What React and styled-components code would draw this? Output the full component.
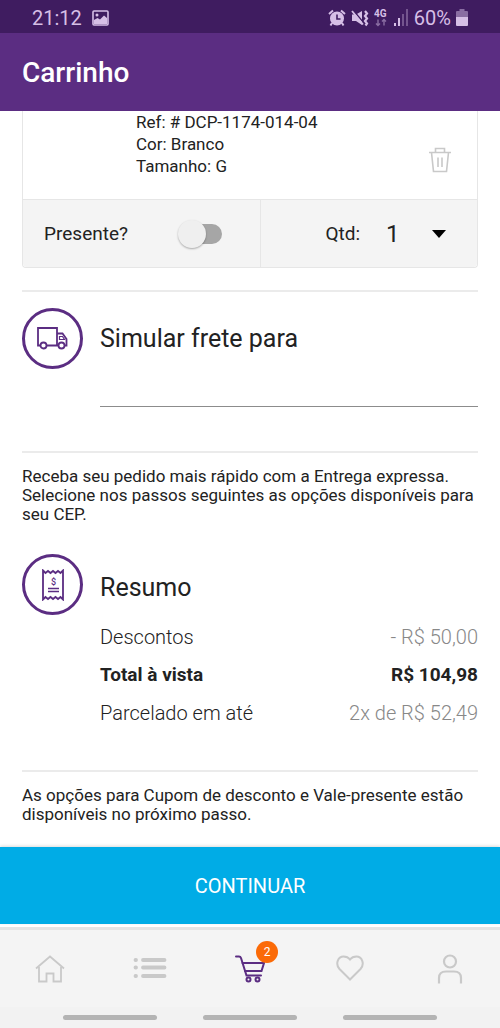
import React, { useState } from 'react';
import styled, { createGlobalStyle, ThemeProvider } from 'styled-components';

const theme = {
  primary: '#5b2d82',
  primaryDark: '#3f1c60',
  status: '#d6bfe6',
  accent: '#00ace6',
  badge: '#fb6a07',
  text: '#222222',
  muted: '#888888',
  icon: '#c9c9c9',
  line: '#e6e6e6',
  surface: '#f4f4f4',
};

const GlobalStyle = createGlobalStyle`
  * {
    box-sizing: border-box;
  }

  body {
    margin: 0;
    background-color: #ffffff;
    font-family: Roboto, "Liberation Sans", sans-serif;
  }

  button,
  input,
  select {
    font-family: inherit;
  }
`;

const Page = styled.div`
  display: flex;
  flex-direction: column;
  min-height: 100vh;
  color: ${({ theme }) => theme.text};
`;

const StatusBar = styled.div`
  display: flex;
  justify-content: space-between;
  align-items: center;
  height: 33px;
  padding: 2px 32px 0;
  background-color: ${({ theme }) => theme.primaryDark};
  color: ${({ theme }) => theme.status};
  font-size: 20px;
  line-height: 24px;
`;

const StatusGroup = styled.div`
  display: flex;
  align-items: center;
  gap: ${({ $gap }) => $gap}px;
`;

const Header = styled.header`
  display: flex;
  align-items: center;
  height: 78px;
  padding: 2px 22px 0;
  background-color: ${({ theme }) => theme.primary};
`;

const Title = styled.h1`
  margin: 0;
  color: #ffffff;
  font-size: 28px;
  font-weight: 500;
  line-height: 32px;
`;

const Main = styled.main`
  flex: 1;
  padding: 0 22px;
`;

const Card = styled.article`
  border: 1px solid ${({ theme }) => theme.line};
  border-top: none;
  border-radius: 0 0 4px 4px;
`;

const CardBody = styled.div`
  display: flex;
  justify-content: space-between;
  height: 88px;
  padding: 0 25px 0 113px;
  font-size: 17px;
  line-height: 22px;
`;

const Detail = styled.div``;

const IconButton = styled.button`
  align-self: flex-end;
  margin-bottom: 26px;
  padding: 0;
  border: none;
  background: none;
  color: ${({ theme }) => theme.icon};
  cursor: pointer;

  svg {
    display: block;
  }
`;

const CardFooter = styled.div`
  display: grid;
  grid-template-columns: 238fr 216fr;
  height: 68px;
  border-top: 1px solid ${({ theme }) => theme.line};
  border-radius: 0 0 4px 4px;
  background-color: ${({ theme }) => theme.surface};
  font-size: 19px;
`;

const GiftCell = styled.div`
  display: flex;
  justify-content: space-between;
  align-items: center;
  padding: 0 38px 0 21px;
  border-right: 1px solid ${({ theme }) => theme.line};
`;

const QuantityCell = styled.div`
  display: flex;
  justify-content: flex-end;
  align-items: center;
  gap: 26px;
  padding-right: 31px;
`;

const Switch = styled.input`
  display: flex;
  align-items: center;
  appearance: none;
  width: 44px;
  height: 28px;
  margin: 0;
  background: none;
  cursor: pointer;

  &::before {
    content: '';
    z-index: 1;
    flex: none;
    width: 28px;
    height: 28px;
    border-radius: 50%;
    background-color: #efefef;
    box-shadow: 0 1px 2px rgba(0, 0, 0, 0.3);
  }

  &::after {
    content: '';
    flex: none;
    width: 36px;
    height: 20px;
    margin-left: -20px;
    border-radius: 10px;
    background-color: #a6a6a6;
  }

  &:checked::before {
    order: 1;
    margin-left: -20px;
    background-color: ${({ theme }) => theme.primary};
  }

  &:checked::after {
    margin-left: 0;
  }
`;

const SelectBox = styled.div`
  display: grid;
  align-items: center;

  > * {
    grid-area: 1 / 1;
  }

  svg {
    justify-self: end;
    pointer-events: none;
  }
`;

const Select = styled.select`
  appearance: none;
  width: 60px;
  padding: 0;
  border: none;
  background: none;
  color: ${({ theme }) => theme.text};
  font-size: 24px;
  line-height: 28px;
`;

const Divider = styled.hr`
  height: 2px;
  margin: ${({ $top }) => $top}px 0 0;
  border: none;
  background-color: #ebebeb;
`;

const Section = styled.section`
  display: grid;
  grid-template-columns: 61px 1fr;
  column-gap: 17px;
  margin-top: ${({ $top }) => $top}px;
`;

const Circle = styled.div`
  display: flex;
  justify-content: center;
  align-items: center;
  width: 61px;
  height: 61px;
  border: 3px solid ${({ theme }) => theme.primary};
  border-radius: 50%;
  color: ${({ theme }) => theme.primary};
`;

const SectionTitle = styled.h2`
  align-self: ${({ $low }) => ($low ? 'end' : 'center')};
  margin: 0;
  padding-bottom: ${({ $low }) => ($low ? 11 : 0)}px;
  font-size: 25px;
  font-weight: 400;
  line-height: 32px;
`;

const SectionLabel = styled(SectionTitle).attrs({ as: 'label' })``;

const SectionContent = styled.div`
  grid-column: 2;
`;

const ZipInput = styled.input`
  display: block;
  width: 100%;
  height: 38px;
  padding: 0;
  border: none;
  border-bottom: 1px solid #8c8c8c;
  background: none;
  font-size: 19px;
  outline: none;
`;

const Note = styled.p`
  margin: ${({ $top }) => $top}px 0 0;
  font-size: 17px;
  line-height: 19px;
`;

const Summary = styled.dl`
  margin: 3px 0 0;
`;

const SummaryRow = styled.div`
  display: flex;
  justify-content: space-between;
  font-size: ${({ $strong }) => ($strong ? 19 : 20)}px;
  font-weight: ${({ $strong }) => ($strong ? 700 : 300)};
  line-height: 38px;

  dd {
    margin: 0;
    color: ${({ theme, $strong }) => ($strong ? theme.text : theme.muted)};
  }
`;

const ContinueButton = styled.button`
  height: 77px;
  padding: 0;
  border: none;
  background-color: ${({ theme }) => theme.accent};
  box-shadow: 0 -1px 3px rgba(0, 0, 0, 0.15);
  color: #ffffff;
  font-size: 20px;
  cursor: pointer;
`;

const BottomNav = styled.nav`
  display: grid;
  grid-template-columns: repeat(5, 1fr);
  height: 80px;
  margin-top: 3px;
  border-top: 3px solid #e4e4e4;
  background-color: ${({ theme }) => theme.surface};
`;

const NavLink = styled.a`
  display: flex;
  justify-content: center;
  align-items: center;
  color: ${({ theme, $active }) => ($active ? theme.primary : theme.icon)};
`;

const NavIcon = styled.span`
  position: relative;
  display: flex;
`;

const Badge = styled.span`
  position: absolute;
  top: -14px;
  right: -13px;
  width: 22px;
  height: 22px;
  border-radius: 50%;
  background-color: ${({ theme }) => theme.badge};
  color: #ffffff;
  font-size: 12px;
  line-height: 22px;
  text-align: center;
`;

const GestureBar = styled.div`
  display: flex;
  justify-content: center;
  gap: 46px;
  height: 21px;
  padding-top: 8px;
  background-color: #f2f2f2;
`;

const GestureHint = styled.span`
  width: 94px;
  height: 5px;
  border-radius: 3px;
  background-color: #b4b4b4;
`;

const PictureIcon = () => (
  <svg width="17" height="16" viewBox="0 0 17 16" fill="none">
    <rect x="1" y="1" width="15" height="14" rx="1" stroke="currentColor" strokeWidth="1.6" />
    <circle cx="5" cy="5" r="1.5" fill="currentColor" />
    <path d="M2 10 5.5 8 8 9.5 12 5.5 15 8V14H2z" fill="currentColor" />
  </svg>
);

const AlarmIcon = () => (
  <svg width="18" height="18" viewBox="0 0 18 18" fill="none">
    <path d="M1 5 5 1.5M17 5 13 1.5M4 14 2.5 16.5M14 14 15.5 16.5" stroke="currentColor" strokeWidth="2" />
    <circle cx="9" cy="9.5" r="7" fill="currentColor" />
    <path d="M9 5.5V10H12.5" stroke="#3f1c60" strokeWidth="1.6" />
  </svg>
);

const MuteIcon = () => (
  <svg width="18" height="18" viewBox="0 0 18 18" fill="none">
    <path d="M1 5.5H5L11 2V16L5 12H1z" fill="currentColor" />
    <path d="M2 1 12 13" stroke="#3f1c60" strokeWidth="1.4" />
    <path d="M1 2 12 15.5" stroke="currentColor" strokeWidth="1.8" />
    <path d="M14 2 16 4.5 14 7 16 9.5 14 12 16 14.5 14.5 16.5" stroke="currentColor" strokeWidth="2.2" />
  </svg>
);

const NetworkIcon = () => (
  <svg width="14" height="18" viewBox="0 0 14 18" fill="none">
    <text x="0" y="8" fill="currentColor" fontSize="10" fontWeight="700">4G</text>
    <path d="M4 10.5V16.5M2 14.5 4 16.5 6 14.5M10 16.5V10.5M8 12.5 10 10.5 12 12.5" stroke="currentColor" strokeWidth="1.4" opacity="0.5" />
  </svg>
);

const SignalIcon = () => (
  <svg width="16" height="17" viewBox="0 0 16 17" fill="currentColor">
    <rect x="1" y="14" width="2" height="3" />
    <rect x="5" y="9" width="2" height="8" />
    <rect x="9" y="5" width="2" height="12" opacity="0.35" />
    <rect x="13" y="0" width="2" height="17" opacity="0.35" />
  </svg>
);

const BatteryIcon = () => (
  <svg width="12" height="17" viewBox="0 0 12 17" fill="currentColor">
    <path d="M3.5 0H8.5V2H11Q12 2 12 3V8H0V3Q0 2 1 2H3.5z" opacity="0.5" />
    <path d="M0 8H12V16Q12 17 11 17H1Q0 17 0 16z" />
  </svg>
);

const TrashIcon = () => (
  <svg width="24" height="26" viewBox="0 0 24 26" fill="none" stroke="currentColor" strokeWidth="1.6">
    <path d="M1 5.5H23M7.5 5.5V1.5H16.5V5.5M3.5 5.5 5.5 24.5H18.5L20.5 5.5M10 10.5V20M14 10.5V20" />
  </svg>
);

const CaretIcon = () => (
  <svg width="14" height="8" viewBox="0 0 14 8" fill="#000000">
    <path d="M0 0H14L7 8z" />
  </svg>
);

const TruckIcon = () => (
  <svg width="31" height="23" viewBox="0 0 31 23" fill="none" stroke="currentColor" strokeWidth="1.8">
    <path d="M3.5 18.5H1V1H20V18.5H9.5M20 6.5H25.5L29.5 12V18.5H27.5M20 18.5H21.5" />
    <path d="M22.5 9.5H25.5L27.5 12.5H22.5z" strokeWidth="1.2" />
    <circle cx="6.5" cy="18.5" r="3" />
    <circle cx="24.5" cy="18.5" r="3" />
  </svg>
);

const ReceiptIcon = () => (
  <svg width="24" height="32" viewBox="0 0 24 32" fill="none" stroke="currentColor" strokeWidth="1.8">
    <path d="M2 1.5 4.5 4 7 2 9.5 4 12 2 14.5 4 17 2 19.5 4 22 1.5V30.5L19.5 28 17 30 14.5 28 12 30 9.5 28 7 30 4.5 28 2 30.5z" />
    <path d="M7 19.5H18M7 22.5H18" strokeWidth="1.5" />
    <text x="12.5" y="16" fill="currentColor" stroke="none" fontSize="9" fontWeight="500" textAnchor="middle">$</text>
  </svg>
);

const HomeIcon = () => (
  <svg width="30" height="28" viewBox="0 0 30 28" fill="none" stroke="currentColor" strokeWidth="1.8">
    <path d="M1 13.5 15 1.5 29 13.5M4 12V26.5H11.5V18.5H18.5V26.5H26V12" />
  </svg>
);

const ListIcon = () => (
  <svg width="34" height="24" viewBox="0 0 34 24" fill="none" stroke="currentColor" strokeWidth="3.8" strokeLinecap="round">
    <path d="M2.5 3H3M10 3H31.5M2.5 10.5H3M10 10.5H31.5M2.5 19H3M10 19H31.5" />
  </svg>
);

const CartIcon = () => (
  <svg width="30" height="28" viewBox="0 0 30 28" fill="none" stroke="currentColor" strokeWidth="2" strokeLinecap="round">
    <path d="M1 1.5H4Q5.5 1.5 6 3L11.5 20.5H26" />
    <path d="M7.5 8H29L26.5 16H10" />
    <circle cx="13.5" cy="24.5" r="2" />
    <circle cx="22.5" cy="24.5" r="2" />
  </svg>
);

const HeartIcon = () => (
  <svg width="28" height="28" viewBox="0 0 28 28" fill="none" stroke="currentColor" strokeWidth="2">
    <path d="M14 24.5 3.5 14C-1 9 2 1.5 7.5 1.5 10.5 1.5 12.500 2.500 14 4.500 15.500 2.500 17.5 1.5 20.5 1.5 26 1.5 29 9 24.5 14z" />
  </svg>
);

const UserIcon = () => (
  <svg width="26" height="30" viewBox="0 0 26 30" fill="none" stroke="currentColor" strokeWidth="2.2">
    <circle cx="13" cy="7.5" r="6" />
    <path d="M2 29.5V24Q2 17.5 9 17.5H17Q24 17.5 24 24V29.5" />
  </svg>
);

const summary = [
  { label: 'Descontos', value: '- R$ 50,00' },
  { label: 'Total à vista', value: 'R$ 104,98', strong: true },
  { label: 'Parcelado em até', value: '2x de R$ 52,49' },
];

const navItems = [
  { label: 'Início', href: '#inicio', Icon: HomeIcon },
  { label: 'Categorias', href: '#categorias', Icon: ListIcon },
  { label: 'Carrinho', href: '#carrinho', Icon: CartIcon, badge: 2 },
  { label: 'Favoritos', href: '#favoritos', Icon: HeartIcon },
  { label: 'Conta', href: '#conta', Icon: UserIcon },
];

const CartItem = () => {
  const [isGift, setIsGift] = useState(false);
  const [quantity, setQuantity] = useState('1');

  return (
    <Card>
      <CardBody>
        <div>
          <Detail>Ref: # DCP-1174-014-04</Detail>
          <Detail>Cor: Branco</Detail>
          <Detail>Tamanho: G</Detail>
        </div>
        <IconButton type="button" aria-label="Remover">
          <TrashIcon />
        </IconButton>
      </CardBody>
      <CardFooter>
        <GiftCell>
          <label htmlFor="gift">Presente?</label>
          <Switch
            id="gift"
            type="checkbox"
            checked={isGift}
            onChange={(event) => setIsGift(event.target.checked)}
          />
        </GiftCell>
        <QuantityCell>
          <label htmlFor="quantity">Qtd:</label>
          <SelectBox>
            <Select
              id="quantity"
              value={quantity}
              onChange={(event) => setQuantity(event.target.value)}
            >
              <option value="1">1</option>
              <option value="2">2</option>
              <option value="3">3</option>
            </Select>
            <CaretIcon />
          </SelectBox>
        </QuantityCell>
      </CardFooter>
    </Card>
  );
};

const App = () => {
  const [zip, setZip] = useState('');

  return (
    <ThemeProvider theme={theme}>
      <GlobalStyle />
      <Page>
        <StatusBar>
          <StatusGroup $gap={10}>
            21:12
            <PictureIcon />
          </StatusGroup>
          <StatusGroup $gap={5}>
            <AlarmIcon />
            <MuteIcon />
            <NetworkIcon />
            <SignalIcon />
            60%
            <BatteryIcon />
          </StatusGroup>
        </StatusBar>
        <Header>
          <Title>Carrinho</Title>
        </Header>
        <Main>
          <CartItem />
          <Divider $top={22} />
          <Section $top={16}>
            <Circle>
              <TruckIcon />
            </Circle>
            <SectionLabel htmlFor="zip">Simular frete para</SectionLabel>
            <SectionContent>
              <ZipInput id="zip" value={zip} onChange={(event) => setZip(event.target.value)} />
            </SectionContent>
          </Section>
          <Divider $top={44} />
          <Note $top={14}>
            Receba seu pedido mais rápido com a Entrega expressa. Selecione nos passos seguintes as
            opções disponíveis para seu CEP.
          </Note>
          <Section $top={30}>
            <Circle>
              <ReceiptIcon />
            </Circle>
            <SectionTitle $low>Resumo</SectionTitle>
            <SectionContent>
              <Summary>
                {summary.map((row) => (
                  <SummaryRow key={row.label} $strong={row.strong}>
                    <dt>{row.label}</dt>
                    <dd>{row.value}</dd>
                  </SummaryRow>
                ))}
              </Summary>
            </SectionContent>
          </Section>
          <Divider $top={38} />
          <Note $top={14}>
            As opções para Cupom de desconto e Vale-presente estão disponíveis no próximo passo.
          </Note>
        </Main>
        <ContinueButton type="button">CONTINUAR</ContinueButton>
        <BottomNav>
          {navItems.map(({ label, href, Icon, badge }) => (
            <NavLink key={label} href={href} aria-label={label} $active={Boolean(badge)}>
              <NavIcon>
                <Icon />
                {badge && <Badge>{badge}</Badge>}
              </NavIcon>
            </NavLink>
          ))}
        </BottomNav>
        <GestureBar>
          <GestureHint />
          <GestureHint />
          <GestureHint />
        </GestureBar>
      </Page>
    </ThemeProvider>
  );
};

export default App;
